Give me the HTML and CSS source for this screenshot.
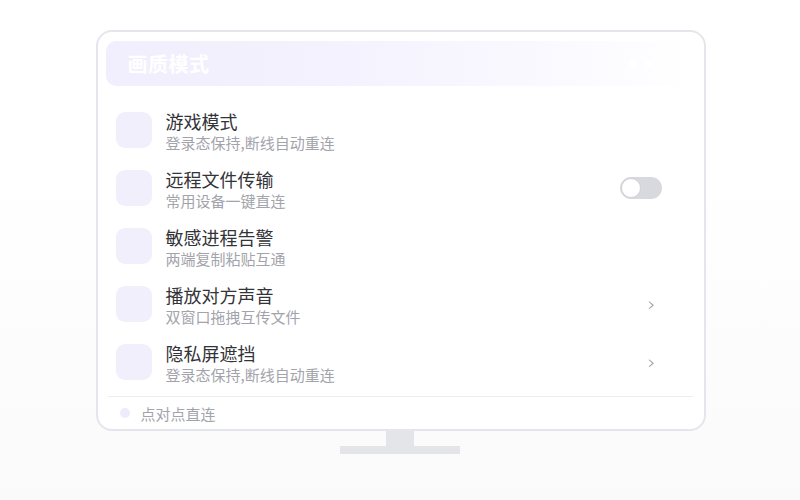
FILE: index.html
```html
<!DOCTYPE html>
<html lang="zh">
<head>
<meta charset="utf-8">
<link rel="stylesheet" href="styles.css">
</head>
<body>
<div class="page">
  <div class="monitor">
    <div class="header">
      <span class="header-title">画质模式</span>
      <span class="dots"><i></i><i></i><i></i></span>
    </div>
    <div class="list">
      <div class="row">
        <div class="icon"></div>
        <div class="text"><div class="title">游戏模式</div><div class="sub">登录态保持,断线自动重连</div></div>
      </div>
      <div class="row">
        <div class="icon"></div>
        <div class="text"><div class="title">远程文件传输</div><div class="sub">常用设备一键直连</div></div>
        <div class="toggle"><span class="knob"></span></div>
      </div>
      <div class="row">
        <div class="icon"></div>
        <div class="text"><div class="title">敏感进程告警</div><div class="sub">两端复制粘贴互通</div></div>
      </div>
      <div class="row">
        <div class="icon"></div>
        <div class="text"><div class="title">播放对方声音</div><div class="sub">双窗口拖拽互传文件</div></div>
        <div class="chev">›</div>
      </div>
      <div class="row">
        <div class="icon"></div>
        <div class="text"><div class="title">隐私屏遮挡</div><div class="sub">登录态保持,断线自动重连</div></div>
        <div class="chev">›</div>
      </div>
    </div>
    <div class="footer">
      <span class="fdot"></span><span class="ftext">点对点直连</span>
    </div>
  </div>
  <div class="neck"></div>
  <div class="base"></div>
</div>
</body>
</html>
```

FILE: styles.css
```css
html, body {
  margin: 0;
  padding: 0;
}
body {
  width: 800px;
  height: 500px;
  background: linear-gradient(180deg, #ffffff 0%, #ffffff 35%, #fafafb 100%);
  font-family: "Noto Sans CJK SC", "Noto Sans", sans-serif;
  overflow: hidden;
}
.page {
  display: flex;
  flex-direction: column;
  align-items: center;
  padding-top: 30px;
}
.monitor {
  box-sizing: border-box;
  width: 610px;
  height: 401px;
  border: 2px solid #e4e6eb;
  border-radius: 16px;
  background: #ffffff;
  padding: 9px 10px 0 8px;
  display: flex;
  flex-direction: column;
  margin-left: 1px;
}
.header {
  height: 45px;
  border-radius: 10px;
  background: linear-gradient(90deg, #f1eefd 0%, #f4f2fe 40%, #fbfaff 80%, rgba(255,255,255,0) 100%);
  display: flex;
  align-items: center;
  padding-left: 22px;
  padding-right: 26px;
  flex-shrink: 0;
}
.header-title {
  color: #ffffff;
  font-size: 20px;
  font-weight: 700;
  letter-spacing: 0.5px;
  flex: 1;
}
.dots {
  display: flex;
  gap: 9px;
}
.dots i {
  width: 7px;
  height: 7px;
  border-radius: 50%;
  background: #ffffff;
  display: block;
}
.list {
  display: flex;
  flex-direction: column;
  gap: 18px;
  padding: 26px 0 0 10px;
}
.row {
  display: flex;
  align-items: flex-start;
  height: 40px;
  padding-right: 32px;
}
.icon {
  width: 36px;
  height: 36px;
  border-radius: 9px;
  background: #f2effd;
  flex-shrink: 0;
}
.text {
  margin-left: 14px;
  margin-top: -1px;
  flex: 1;
}
.title {
  font-size: 18px;
  line-height: 20px;
  color: #333338;
}
.sub {
  font-size: 15px;
  line-height: 20px;
  margin-top: 2px;
  color: #a3a4ab;
}
.toggle {
  align-self: center;
  width: 42px;
  height: 22px;
  border-radius: 11px;
  background: #d7d9de;
  position: relative;
  margin-top: -5px;
}
.knob {
  position: absolute;
  left: 1px;
  top: 1px;
  width: 18px;
  height: 18px;
  border-radius: 50%;
  background: #ffffff;
  border: 1px solid #cfd2d8;
}
.chev {
  align-self: center;
  font-family: "DejaVu Sans", sans-serif;
  font-size: 20px;
  font-weight: 300;
  line-height: 20px;
  color: #8a8c94;
  margin-right: 6px;
  margin-top: -5px;
}
.footer {
  margin-top: 12px;
  border-top: 1px solid #eceef1;
  margin-left: 2px;
  margin-right: 1px;
  flex: 1;
  display: flex;
  align-items: center;
  padding-left: 12px;
}
.fdot {
  width: 10px;
  height: 10px;
  border-radius: 50%;
  background: #eeebfc;
}
.ftext {
  margin-left: 11px;
  font-size: 15px;
  color: #a3a4ab;
}
.neck {
  width: 28px;
  height: 15px;
  background: #e3e5e9;
}
.base {
  width: 120px;
  height: 8px;
  background: #e3e5e9;
}
```
